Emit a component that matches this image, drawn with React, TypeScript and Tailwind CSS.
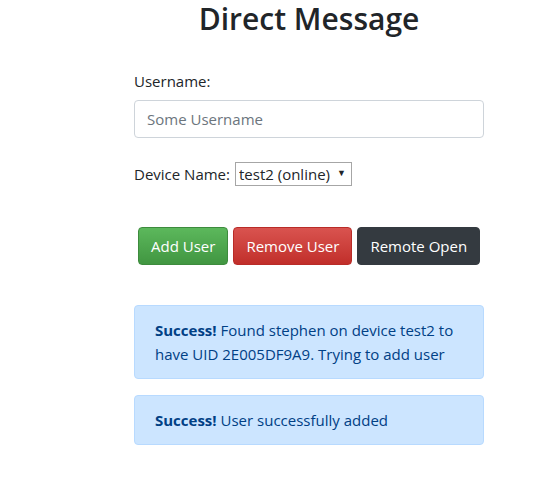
import { useState } from "react";

const font = "font-['Open_Sans','Noto_Sans',sans-serif]";

export default function App() {
  const [username, setUsername] = useState("");
  const [device, setDevice] = useState("test2");

  return (
    <main className={`min-h-screen bg-white text-[#212529] ${font}`}>
      <div className="ml-[134px] w-[350px]">
        <h2 className="text-center text-[30px] font-semibold leading-[38px]">Direct Message</h2>

        <label className="mt-[31px] block text-[15px] leading-6" htmlFor="username">Username:</label>
        <input
          id="username"
          className="mt-[7px] block h-[38px] w-full rounded border border-[#ced4da] px-3 text-[15px] leading-6 outline-none placeholder:text-[#6c757d]"
          placeholder="Some Username"
          value={username}
          onChange={(event) => setUsername(event.target.value)}
        />

        <div className="mt-[24px] flex h-6 items-center gap-[5px] text-[15px] leading-6">
          <label htmlFor="device">Device Name:</label>
          <div className="relative">
            <select
              id="device"
              className="h-[24px] w-[117px] appearance-none border border-[#a6a6a6] bg-white pl-[3px] text-[15px] leading-5 outline-none"
              value={device}
              onChange={(event) => setDevice(event.target.value)}
            >
              <option value="test2">test2 (online)</option>
            </select>
            <span className="pointer-events-none absolute right-[6px] top-[3px] text-[9px] leading-4">▼</span>
          </div>
        </div>

        <div className="mt-[41px] flex gap-[5px] pl-1">
          <button className="h-[38px] rounded border border-[#3d8b3d] bg-gradient-to-b from-[#5cb85c] to-[#419641] px-3 text-[15px] text-white" type="button">Add User</button>
          <button className="h-[38px] rounded border border-[#b92c28] bg-gradient-to-b from-[#d9534f] to-[#c12e2a] px-3 text-[15px] text-white" type="button">Remove User</button>
          <button className="h-[38px] rounded border border-[#343a40] bg-[#343a40] px-3 text-[15px] text-white" type="button">Remote Open</button>
        </div>

        <div className="mt-[40px] rounded border border-[#b8daff] bg-[#cce5ff] px-5 py-3 text-[15px] leading-6 text-[#004085]">
          <strong className="font-bold">Success!</strong> Found stephen on device test2 to have UID 2E005DF9A9. Trying to add user
        </div>
        <div className="mt-4 rounded border border-[#b8daff] bg-[#cce5ff] px-5 py-3 text-[15px] leading-6 text-[#004085]">
          <strong className="font-bold">Success!</strong> User successfully added
        </div>
      </div>
    </main>
  );
}
